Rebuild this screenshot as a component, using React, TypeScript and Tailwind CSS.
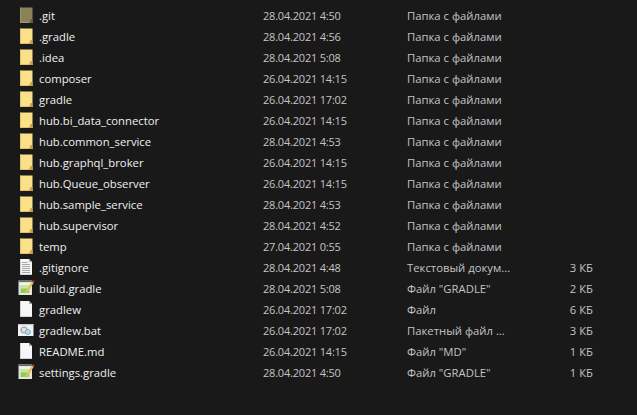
import type { ReactNode } from "react";

const folders: [string, string, boolean?][] = [
  [".git", "28.04.2021 4:50", true],
  [".gradle", "28.04.2021 4:56"],
  [".idea", "28.04.2021 5:08"],
  ["composer", "26.04.2021 14:15"],
  ["gradle", "26.04.2021 17:02"],
  ["hub.bi_data_connector", "26.04.2021 14:15"],
  ["hub.common_service", "28.04.2021 4:53"],
  ["hub.graphql_broker", "26.04.2021 14:15"],
  ["hub.Queue_observer", "26.04.2021 14:15"],
  ["hub.sample_service", "28.04.2021 4:53"],
  ["hub.supervisor", "28.04.2021 4:52"],
  ["temp", "27.04.2021 0:55"],
];
type Kind = "text" | "gradle" | "blank" | "bat";
const files: [string, string, string, string, Kind][] = [
  [".gitignore", "28.04.2021 4:48", "Текстовый докум...", "3 КБ", "text"],
  ["build.gradle", "28.04.2021 5:08", 'Файл "GRADLE"', "2 КБ", "gradle"],
  ["gradlew", "26.04.2021 17:02", "Файл", "6 КБ", "blank"],
  ["gradlew.bat", "26.04.2021 17:02", "Пакетный файл ...", "3 КБ", "bat"],
  ["README.md", "26.04.2021 14:15", 'Файл "MD"', "1 КБ", "blank"],
  ["settings.gradle", "28.04.2021 4:50", 'Файл "GRADLE"', "1 КБ", "gradle"],
];

function Folder({ hidden }: { hidden?: boolean }) {
  const main = hidden ? "#8a8259" : "#fbe08a";
  const edge = hidden ? "#a39a6b" : "#e3bf62";
  const corner = hidden ? "#6b6444" : "#c9a24c";
  return (
    <svg width="16" height="19" viewBox="0 0 16 19" className="overflow-visible">
      <path d="M2 1.500h12.500V17H2z" fill={main} />
      <path d="M2 1.500h.8V17H2zM2 16h12.500v1H2z" fill={edge} />
      <path d="M12.500 13h2v4h-3.500z" fill={corner} />
    </svg>
  );
}

function FileIcon({ kind }: { kind: Kind }) {
  if (kind === "gradle") {
    return (
      <svg width="16" height="19" viewBox="0 0 16 19" className="overflow-visible">
        <path d="M0.500 1.500h13.500v14.500H0.500z" fill="#e2e2e2" />
        <path d="M1 1.500h13v1.500H1z" fill="#6a6a6a" />
        <path d="M2 4h10.500v10.500H2z" fill="#f1f5e8" />
        <path d="M2.500 6h9v8H2.500z" fill="#8ccb5f" />
        <path d="M2.500 6h9v3.500H2.500z" fill="#c7e6a5" />
        <path d="M7.500 12.500l6.500-10 1.800 1.200-6.500 10-2.400 1z" fill="#e8bf4f" />
        <path d="M14 2.500l1-1.500 1.700 1.200-.9 1.500z" fill="#a33a3a" />
      </svg>
    );
  }
  if (kind === "bat") {
    return (
      <svg width="16" height="19" viewBox="0 0 16 19" className="overflow-visible">
        <path d="M0 3h15.500v12H0z" fill="#f2f2f2" />
        <path d="M0 3h15.500v1.200H0z" fill="#c9c9c9" />
        <circle cx="6" cy="9" r="3" fill="#e2e2e2" stroke="#9c9c9c" strokeWidth="1.200" />
        <circle cx="9.800" cy="11" r="2.500" fill="#bcdcf0" stroke="#74aed4" strokeWidth="1" />
      </svg>
    );
  }
  return (
    <svg width="16" height="19" viewBox="0 0 16 19" className="overflow-visible">
      <path d="M2 1h9l3 3v13H2z" fill="#f6f6f6" />
      <path d="M2 1h.7v16H2zM2 16.300h12v.7H2z" fill="#c4c4c4" />
      <path d="M11 1v3h3z" fill="#a8a8a8" />
      {kind === "text" && (
        <path
          d="M4 4.500h5.500M4 6.500h8M4 8.500h8M4 10.500h8M4 12.500h8M4 14.500h8"
          stroke="#a6a6a6"
          strokeWidth="1"
          fill="none"
        />
      )}
    </svg>
  );
}

function Row({
  icon,
  name,
  date,
  type,
  size,
}: {
  icon: ReactNode;
  name: string;
  date: string;
  type: string;
  size?: string;
}) {
  return (
    <div className="grid h-[21px] grid-cols-[17px_228px_144px_186px] items-center pl-[18px]">
      <div className="flex items-center">{icon}</div>
      <div className="pl-[4px] text-[#f0f0f0]">{name}</div>
      <div className="text-[11px] tracking-[-0.2px] text-[#c4c4c4]">{date}</div>
      <div className="relative text-[#c4c4c4]">
        {type}
        {size && <span className="absolute right-0 top-0">{size}</span>}
      </div>
    </div>
  );
}

export default function App() {
  return (
    <div className="h-[415px] w-[637px] overflow-hidden bg-[#191919] pt-[5px] font-['Open_Sans',sans-serif] text-[11.3px] leading-[21px]">
      {folders.map(([name, date, hidden]) => (
        <Row key={name} icon={<Folder hidden={hidden} />} name={name} date={date} type="Папка с файлами" />
      ))}
      {files.map(([name, date, type, size, kind]) => (
        <Row key={name} icon={<FileIcon kind={kind} />} name={name} date={date} type={type} size={size} />
      ))}
    </div>
  );
}
